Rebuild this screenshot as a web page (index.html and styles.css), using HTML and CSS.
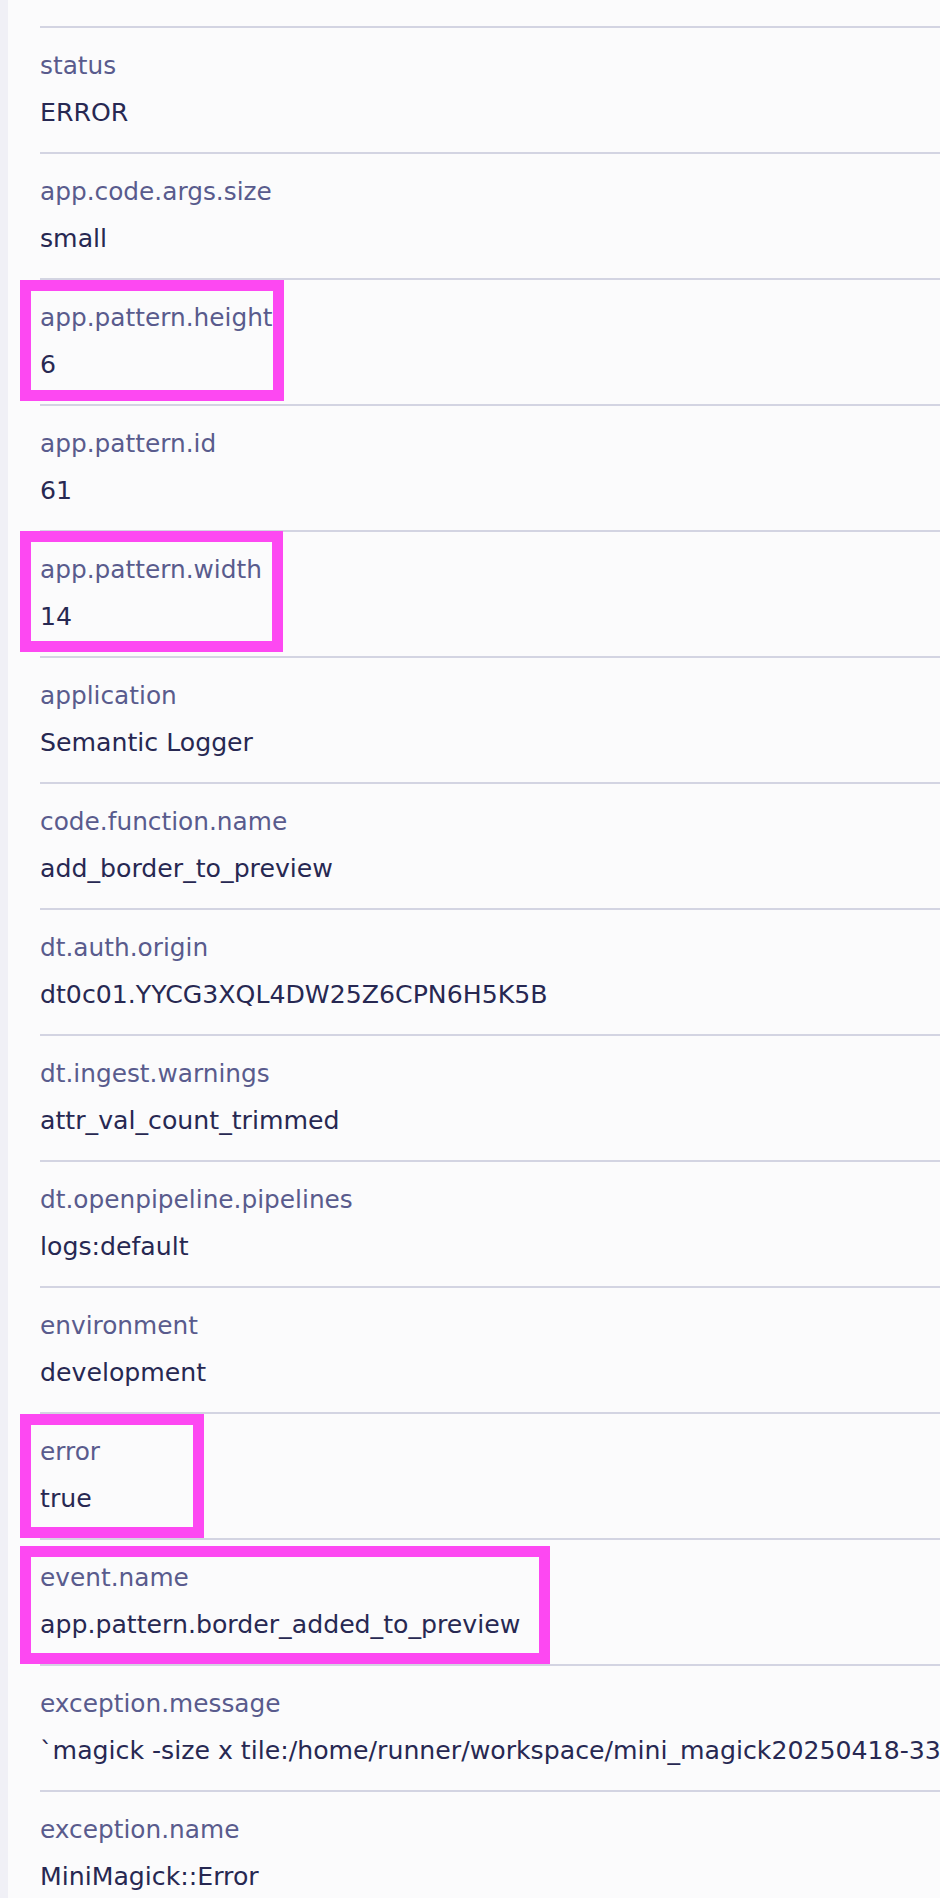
FILE: index.html
```html
<!DOCTYPE html>
<html lang="en">
<head>
<meta charset="utf-8">
<title>Log record attributes</title>
<link rel="stylesheet" href="styles.css">
</head>
<body>
<div class="page">
  <div class="strip"></div>
  <main class="main">
    <dl class="fields">
      <div class="field">
        <dt class="key">content</dt>
        <dd class="val">Error when adding border</dd>
      </div>
      <div class="field">
        <dt class="key">status</dt>
        <dd class="val">ERROR</dd>
      </div>
      <div class="field">
        <dt class="key">app.code.args.size</dt>
        <dd class="val">small</dd>
      </div>
      <div class="field">
        <dt class="key">app.pattern.height</dt>
        <dd class="val">6</dd>
        <span class="mark mark-height"></span>
      </div>
      <div class="field">
        <dt class="key">app.pattern.id</dt>
        <dd class="val">61</dd>
      </div>
      <div class="field">
        <dt class="key">app.pattern.width</dt>
        <dd class="val">14</dd>
        <span class="mark mark-width"></span>
      </div>
      <div class="field">
        <dt class="key">application</dt>
        <dd class="val">Semantic Logger</dd>
      </div>
      <div class="field">
        <dt class="key">code.function.name</dt>
        <dd class="val">add_border_to_preview</dd>
      </div>
      <div class="field">
        <dt class="key">dt.auth.origin</dt>
        <dd class="val">dt0c01.YYCG3XQL4DW25Z6CPN6H5K5B</dd>
      </div>
      <div class="field">
        <dt class="key">dt.ingest.warnings</dt>
        <dd class="val">attr_val_count_trimmed</dd>
      </div>
      <div class="field">
        <dt class="key">dt.openpipeline.pipelines</dt>
        <dd class="val">logs:default</dd>
      </div>
      <div class="field">
        <dt class="key">environment</dt>
        <dd class="val">development</dd>
      </div>
      <div class="field">
        <dt class="key">error</dt>
        <dd class="val">true</dd>
        <span class="mark mark-error"></span>
      </div>
      <div class="field">
        <dt class="key">event.name</dt>
        <dd class="val">app.pattern.border_added_to_preview</dd>
        <span class="mark mark-event"></span>
      </div>
      <div class="field">
        <dt class="key">exception.message</dt>
        <dd class="val">`magick -size x tile:/home/runner/workspace/mini_magick20250418-33</dd>
      </div>
      <div class="field">
        <dt class="key">exception.name</dt>
        <dd class="val">MiniMagick::Error</dd>
      </div>
    </dl>
  </main>
</div>
</body>
</html>
```
FILE: styles.css
```css
html, body {
  margin: 0;
  padding: 0;
  background: #fbfbfc;
}

.page {
  display: flex;
  height: 1898px;
  overflow: hidden;
  font-family: "DejaVu Sans", "Noto Sans", sans-serif;
}

.strip {
  width: 8px;
  flex: none;
  background: #f0f0f6;
}

.main {
  flex: 1;
  min-width: 0;
  padding-left: 32px;
  background: #fbfbfc;
  overflow: hidden;
}

.fields {
  margin: -100px 0 0 0;
  padding: 0;
  display: flex;
  flex-direction: column;
}

.field {
  position: relative;
  display: flex;
  flex-direction: column;
  gap: 15px;
  height: 126px;
  box-sizing: border-box;
  padding: 22px 0 23px;
  border-top: 2px solid #d3d4e2;
}

.key {
  margin: 0;
  font-size: 24.8px;
  line-height: 32px;
  color: #595b8d;
  white-space: nowrap;
}

.val {
  margin: 0;
  font-size: 25.2px;
  line-height: 32px;
  color: #272852;
  white-space: nowrap;
}

.mark {
  position: absolute;
  left: -20px;
  border: 11px solid #fd48f2;
  box-sizing: border-box;
  pointer-events: none;
}

.mark-height {
  top: 0;
  width: 264px;
  height: 121px;
}

.mark-width {
  top: -1px;
  width: 263px;
  height: 121px;
}

.mark-error {
  top: 0;
  width: 184px;
  height: 124px;
}

.mark-event {
  top: 6px;
  width: 530px;
  height: 118px;
}
```
